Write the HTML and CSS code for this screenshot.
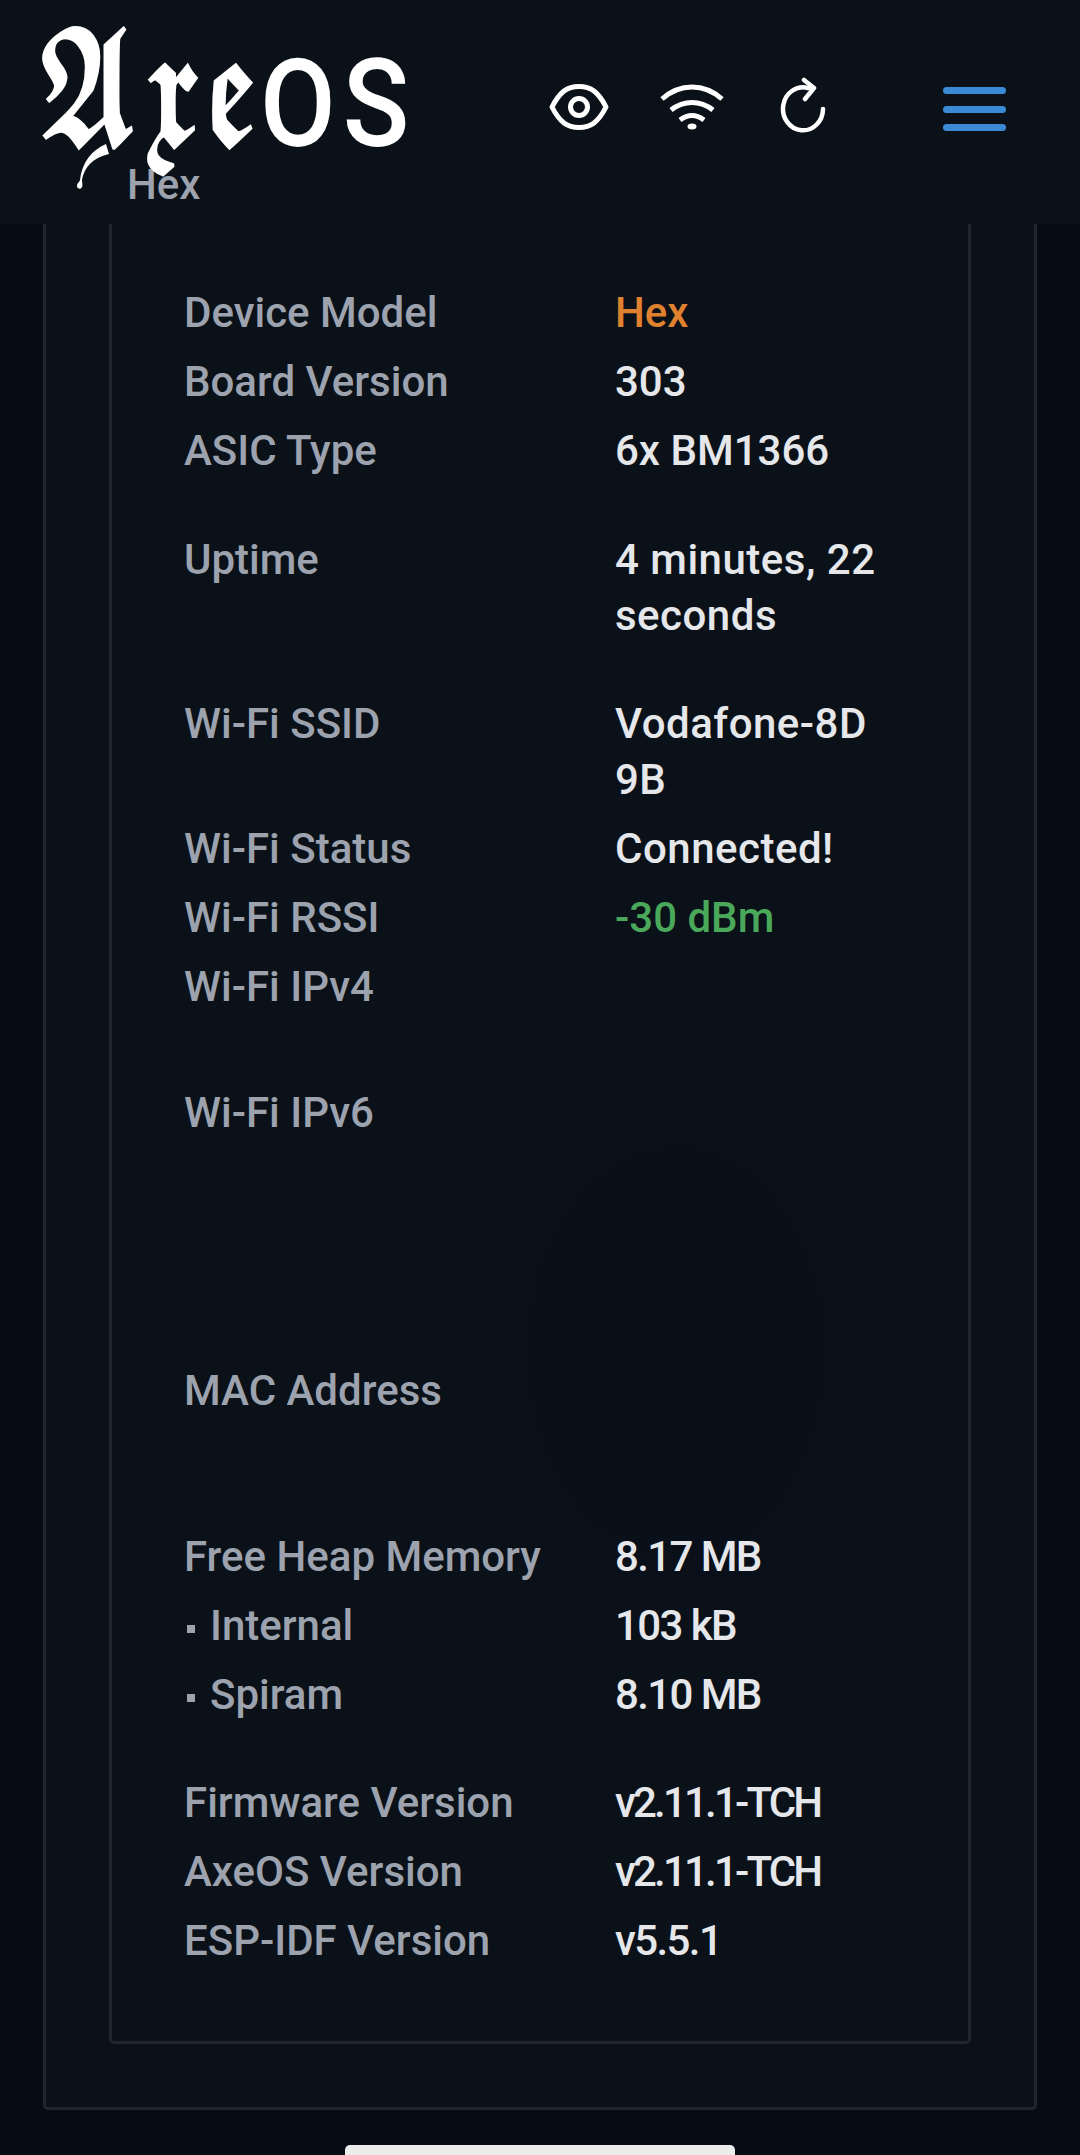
FILE: index.html
```html
<!DOCTYPE html>
<html lang="en">
<head>
  <meta charset="UTF-8">
  <title>AxeOS</title>
  <link rel="stylesheet" href="styles.css">
</head>
<body>
  <header class="topbar">
    <div class="brand">
      <div class="logo"><span class="logo-axe">𝕬𝖝𝖊</span><span class="logo-os">OS</span></div>
      <div class="device-name">Hex</div>
      <svg class="logo-tail" width="40" height="50" viewBox="0 0 40 50" fill="#fff">
        <path d="M34 2C20 8 10 20 8 38c-1 3-3 3-3 6 0 3 4 4 5 1 1-2 0-4 0-7C12 26 20 16 37 12z"/>
      </svg>
    </div>
    <div class="actions">
      <svg class="icon" width="60" height="46" viewBox="0 0 60 46" fill="none" stroke="#fff" stroke-width="5">
        <path d="M3 23C6 17 10 11 15 7c4-3 9-4.500 15-4.500S41 4 45 7c5 4 9 10 12 16-3 6-7 12-12 16-4 3-9 4.500-15 4.500S19 42 15 39C10 35 6 29 3 23z" stroke-linejoin="round"/>
        <circle cx="30" cy="23" r="8.500"/>
      </svg>
      <svg class="icon" width="64" height="46" viewBox="0 0 64 46" fill="none" stroke="#fff" stroke-width="5">
        <path d="M2 15C20-1 44-1 62 15"/>
        <path d="M11 26c13-10 29-10 42 0"/>
        <path d="M20 36c8-6 16-6 24 0"/>
        <ellipse cx="32" cy="42.500" rx="4.500" ry="3" fill="#fff" stroke="none"/>
      </svg>
      <svg class="icon icon-reload" width="46" height="56" viewBox="0 0 46 56" fill="none" stroke="#fff" stroke-width="4.500" stroke-linecap="round" stroke-linejoin="round">
        <path d="M43 32a20 21.500 0 1 1-15-21L33 11"/>
        <path d="M24 3l10 8-9 11"/>
      </svg>
    </div>
    <div class="menu-btn"><span></span><span></span><span></span></div>
  </header>

  <main class="outer-card">
    <section class="inner-card">
      <dl class="info">
        <div class="row"><dt>Device Model</dt><dd class="orange">Hex</dd></div>
        <div class="row"><dt>Board Version</dt><dd>303</dd></div>
        <div class="row"><dt>ASIC Type</dt><dd>6x BM1366</dd></div>
      </dl>
      <dl class="info">
        <div class="row"><dt>Uptime</dt><dd class="wide">4 minutes, 22<br>seconds</dd></div>
      </dl>
      <dl class="info">
        <div class="row"><dt>Wi-Fi SSID</dt><dd class="wide">Vodafone-8D<br>9B</dd></div>
        <div class="row"><dt>Wi-Fi Status</dt><dd class="wide">Connected!</dd></div>
        <div class="row"><dt>Wi-Fi RSSI</dt><dd class="green">-30 dBm</dd></div>
        <div class="row row-two"><dt>Wi-Fi IPv4</dt><dd></dd></div>
        <div class="row row-tall"><dt>Wi-Fi IPv6</dt><dd></dd></div>
        <div class="row row-two"><dt>MAC Address</dt><dd></dd></div>
      </dl>
      <dl class="info">
        <div class="row"><dt>Free Heap Memory</dt><dd class="tight">8.17 MB</dd></div>
        <div class="row"><dt><span class="dot"></span>Internal</dt><dd class="tight">103 kB</dd></div>
        <div class="row"><dt><span class="dot"></span>Spiram</dt><dd class="tight">8.10 MB</dd></div>
      </dl>
      <dl class="info">
        <div class="row"><dt>Firmware Version</dt><dd class="tighter">v2.11.1-TCH</dd></div>
        <div class="row"><dt>AxeOS Version</dt><dd class="tighter">v2.11.1-TCH</dd></div>
        <div class="row"><dt>ESP-IDF Version</dt><dd class="tight">v5.5.1</dd></div>
      </dl>
    </section>
  </main>
  <div class="home-bar"></div>
</body>
</html>
```

FILE: styles.css
```css
* {
  box-sizing: border-box;
}

html, body {
  margin: 0;
  height: 2155px;
  overflow: hidden;
}

body {
  background-color: #060c15;
  font-family: Roboto, sans-serif;
  font-size: 42px;
  font-weight: 500;
  line-height: 56px;
  position: relative;
}

.topbar {
  height: 224px;
  background-color: #0b1118;
  display: flex;
  align-items: flex-start;
  padding-left: 42px;
}

.brand {
  position: relative;
  width: 507px;
  padding-top: 43px;
}

.logo {
  display: flex;
  height: 120px;
  margin-left: -7px;
  color: #fff;
}

.logo-axe {
  display: block;
  width: 225px;
  font-family: "DejaVu Math TeX Gyre", "DejaVu Sans", serif;
  font-size: 130px;
  line-height: 100px;
  -webkit-text-stroke: 2px #fff;
  transform-origin: left top;
  transform: scale(0.76, 1.15);
}

.logo-os {
  display: block;
  margin-top: 12px;
  font-size: 122px;
  line-height: 100px;
  letter-spacing: 8px;
  transform-origin: left top;
  transform: scaleX(0.9);
}

.logo-tail {
  position: absolute;
  left: 30px;
  top: 142px;
}

.device-name {
  color: #9ca3af;
  margin: 0 0 0 85px;
  line-height: 44px;
}

.actions {
  display: flex;
  align-items: flex-start;
  gap: 51px;
  width: 394px;
  padding-top: 84px;
}

.icon-reload {
  margin: -7px 0 0 5px;
}

.menu-btn {
  display: flex;
  flex-direction: column;
  gap: 11.5px;
  width: 63px;
  margin-top: 87px;
}

.menu-btn span {
  height: 7px;
  border-radius: 3.500px;
  background-color: #3a8ad6;
}

.outer-card {
  margin: 0 43px;
  height: 1886px;
  padding: 0 63px;
  background-color: #0b1118;
  border: 3px solid #1f2630;
  border-top: none;
  border-radius: 0 0 5px 5px;
}

.inner-card {
  height: 1820px;
  padding: 61px 0 0 72px;
  border: 3px solid #1f2630;
  border-top: none;
  border-radius: 0 0 5px 5px;
  background-image: radial-gradient(ellipse 240px 330px at 66% 62%, #09101a 60%, #0b1118 100%);
}

.info {
  margin: 0 0 39.500px;
}

.row {
  display: grid;
  grid-template-columns: 431px 1fr;
  padding-bottom: 13px;
}

.row-two {
  min-height: 126px;
}

.row-tall {
  min-height: 278px;
}

dt {
  color: #9ca3af;
}

dd {
  margin: 0;
  color: #e5e7eb;
}

.wide {
  letter-spacing: 0.500px;
}

.tight {
  letter-spacing: -1.600px;
}

.tighter {
  letter-spacing: -2.800px;
}

.orange {
  color: #e0812f;
}

.green {
  color: #4aa85a;
}

.dot {
  display: inline-block;
  width: 8px;
  height: 8px;
  margin: 0 15px 7px 3px;
  background-color: #9ca3af;
}

.home-bar {
  position: absolute;
  left: 345px;
  bottom: 0;
  width: 390px;
  height: 10px;
  background-color: #ececec;
  border-radius: 5px 5px 0 0;
}
```
